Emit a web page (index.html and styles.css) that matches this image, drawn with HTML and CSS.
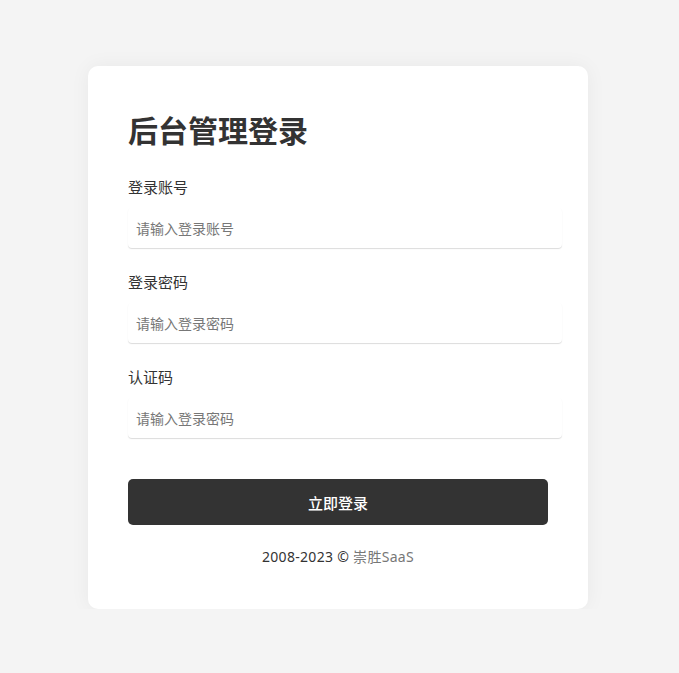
FILE: index.html
```html
<!DOCTYPE html>
<html lang="zh-CN">
<head>
<meta charset="utf-8">
<title>后台管理登录</title>
<link rel="stylesheet" href="styles.css">
</head>
<body>
<main class="page">
  <form class="card">
    <h1 class="title">后台管理登录</h1>
    <div class="field">
      <label class="label">登录账号</label>
      <input class="input" type="text" placeholder="请输入登录账号">
    </div>
    <div class="field">
      <label class="label">登录密码</label>
      <input class="input" type="password" placeholder="请输入登录密码">
    </div>
    <div class="field">
      <label class="label">认证码</label>
      <input class="input" type="text" placeholder="请输入登录密码">
    </div>
    <button class="btn" type="button">立即登录</button>
    <p class="footer">2008-2023 © <span class="brand">崇胜SaaS</span></p>
  </form>
</main>
</body>
</html>
```
FILE: styles.css
```css
* { box-sizing: border-box; }
html, body { margin: 0; padding: 0; }
body {
  background: #f4f4f4;
  font-family: "Noto Sans", "Noto Sans CJK SC", sans-serif;
  color: #333;
}
.page {
  display: flex;
  justify-content: center;
  padding: 66px 3px 0 0;
}
.card {
  width: 500px;
  background: #fff;
  border-radius: 10px;
  box-shadow: 0 0 20px rgba(0,0,0,0.05);
  padding: 45px 40px 42px;
  display: flex;
  flex-direction: column;
}
.title {
  margin: 0 0 26px;
  font-size: 30px;
  line-height: 40px;
  font-weight: 700;
  color: #333;
}
.field {
  display: flex;
  flex-direction: column;
  margin-bottom: 24px;
}
.field:last-of-type { margin-bottom: 0; }
.label {
  font-size: 15px;
  line-height: 20px;
  color: #333;
  margin-bottom: 11px;
}
.input {
  width: 434px;
  height: 40px;
  border: none;
  outline: none;
  border-radius: 4px;
  box-shadow: 0 1px 1px rgba(0,0,0,0.14);
  padding: 0 8px;
  font-family: inherit;
  font-size: 14px;
  color: #333;
  background: #fff;
}
.input::placeholder { color: #777; }
.btn {
  margin-top: 41px;
  height: 46px;
  width: 420px;
  border: none;
  border-radius: 5px;
  background: #333;
  color: #fff;
  font-family: inherit;
  font-size: 15px;
  font-weight: 500;
}
.footer {
  margin: 22px 0 0;
  text-align: center;
  font-size: 14px;
  line-height: 20px;
  color: #333;
  letter-spacing: 0.3px;
}
.brand { color: #777; }
```
